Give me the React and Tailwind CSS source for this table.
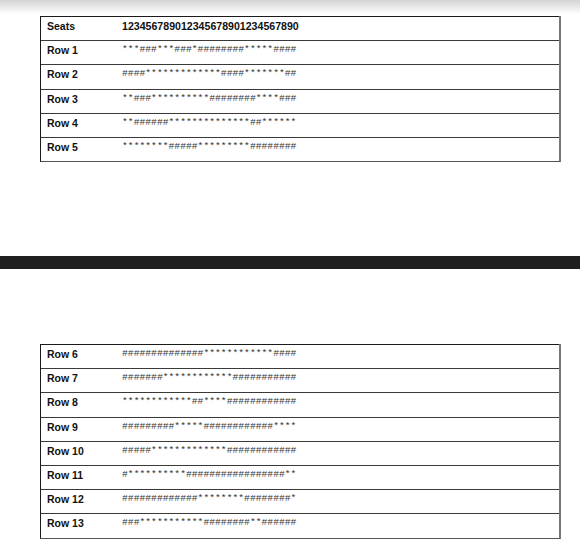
import React from 'react';

const page1 = [
  ['Row 1', '***###***###*########*****####'],
  ['Row 2', '####*************####*******##'],
  ['Row 3', '**###**********########****###'],
  ['Row 4', '**######**************##******'],
  ['Row 5', '********#####*********########'],
];

const page2 = [
  ['Row 6', '##############************####'],
  ['Row 7', '#######************###########'],
  ['Row 8', '************##****############'],
  ['Row 9', '#########*****############****'],
  ['Row 10', '#####*************############'],
  ['Row 11', '#**********#################**'],
  ['Row 12', '#############********########*'],
  ['Row 13', '###***********########**######'],
];

const Row = ({ label, value, bold, first }) => (
  <div className={`grid grid-cols-[81px_1fr] h-[24.2px] border-t ${first ? 'border-[#1a1a1a]' : 'border-[#3a3a3a]'}`}>
    <div className="pl-[6px] pt-[3px] text-[10.5px] leading-[12px] font-bold text-[#111] font-['Liberation_Sans',sans-serif]">
      {label}
    </div>
    {bold ? (
      <div className="pt-[3px] text-[10.6px] leading-[12px] font-bold text-[#111] font-['Liberation_Sans',sans-serif]">
        {value}
      </div>
    ) : (
      <div className="pt-[3px] text-[9.7px] leading-[12px] text-[#333] font-['Liberation_Mono',monospace]">
        {value}
      </div>
    )}
  </div>
);

const Table = ({ rows, header }) => (
  <div className="ml-[40px] mr-[19px] border-l border-l-[#1a1a1a] border-r-2 border-r-[#777] border-b border-b-[#555]">
    {header && <Row label="Seats" value="123456789012345678901234567890" bold first />}
    {rows.map(([l, v], i) => (
      <Row key={l} label={l} value={v} first={!header && i === 0} />
    ))}
  </div>
);

export default function App() {
  return (
    <div className="w-[580px] h-[549px] bg-white overflow-hidden flex flex-col">
      <div className="h-[256px] flex flex-col">
        <div className="h-[14px] bg-gradient-to-b from-[#d4d4d4] to-white" />
        <div className="pt-[2px]">
          <Table rows={page1} header />
        </div>
      </div>
      <div className="h-[13px] bg-[#1f1f1f]" />
      <div className="pt-[75px]">
        <Table rows={page2} />
      </div>
    </div>
  );
}
